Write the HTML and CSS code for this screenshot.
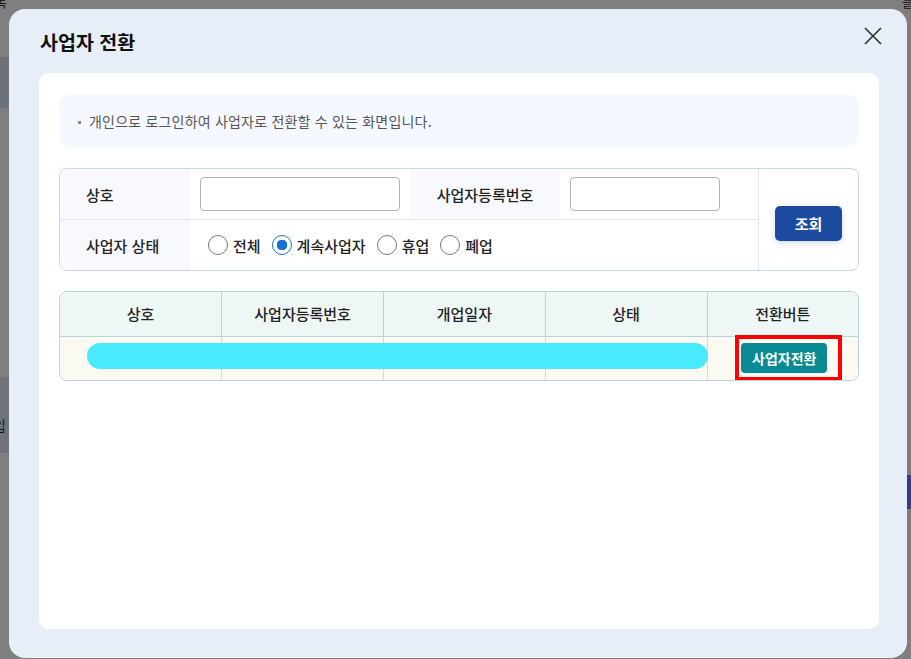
FILE: index.html
```html
<!DOCTYPE html>
<html lang="ko">
<head>
    <meta charset="UTF-8">
    <title>사업자 전환</title>
    <link rel="stylesheet" href="styles.css">
</head>
<body>
    <div class="page">
        <span class="page-text top-left">록</span>
        <span class="page-text top-right">를</span>
        <div class="page-strip strip-a"></div>
        <div class="page-strip strip-b"><span class="page-text">입</span></div>
        <div class="page-strip strip-c"></div>
    </div>

    <div class="modal">
        <div class="modal-head">
            <h2 class="modal-title">사업자 전환</h2>
            <button class="modal-close" aria-label="닫기">
                <svg width="20" height="20" viewBox="0 0 20 20">
                    <path d="M2 2 L18 18 M18 2 L2 18" stroke="#333" stroke-width="1.7" fill="none"/>
                </svg>
            </button>
        </div>

        <div class="panel">
            <div class="notice"><span class="dot"></span>개인으로 로그인하여 사업자로 전환할 수 있는 화면입니다.</div>

            <div class="search">
                <div class="search-fields">
                    <div class="search-row">
                        <div class="label">상호</div>
                        <div class="field"><input type="text" class="text-input"></div>
                        <div class="label label-center">사업자등록번호</div>
                        <div class="field field-short"><input type="text" class="text-input short"></div>
                    </div>
                    <div class="search-row">
                        <div class="label">사업자 상태</div>
                        <div class="field radios">
                            <label class="radio"><input type="radio" name="state"> 전체</label>
                            <label class="radio"><input type="radio" name="state" checked> 계속사업자</label>
                            <label class="radio"><input type="radio" name="state"> 휴업</label>
                            <label class="radio"><input type="radio" name="state"> 폐업</label>
                        </div>
                    </div>
                </div>
                <div class="search-action">
                    <button class="btn-search">조회</button>
                </div>
            </div>

            <div class="result">
                <table class="result-table">
                    <thead>
                        <tr>
                            <th>상호</th>
                            <th>사업자등록번호</th>
                            <th>개업일자</th>
                            <th>상태</th>
                            <th>전환버튼</th>
                        </tr>
                    </thead>
                    <tbody>
                        <tr>
                            <td></td>
                            <td></td>
                            <td></td>
                            <td></td>
                            <td><button class="btn-switch">사업자전환</button></td>
                        </tr>
                    </tbody>
                </table>
                <div class="mask"></div>
                <div class="highlight"></div>
            </div>
        </div>
    </div>
</body>
</html>
```

FILE: styles.css
```css
* {
    box-sizing: border-box;
}
body {
    margin: 0;
    width: 911px;
    height: 659px;
    overflow: hidden;
    background-color: #7f7f7f;
    font-family: "Noto Sans CJK KR", "Noto Sans", sans-serif;
    color: #222;
    position: relative;
}

/* page behind the dimmed overlay */
.page-text {
    position: absolute;
    font-size: 14px;
    color: #1a1a1a;
}
.top-left {
    left: -6px;
    top: -9px;
}
.top-right {
    left: 902px;
    top: -9px;
}
.page-strip {
    position: absolute;
}
.strip-a {
    left: 0;
    top: 57px;
    width: 9px;
    height: 51px;
    background-color: #6e7177;
}
.strip-b {
    left: 0;
    top: 377px;
    width: 9px;
    height: 76px;
    background-color: #6f7278;
}
.strip-b .page-text {
    left: -7px;
    top: 38px;
}
.strip-c {
    left: 907px;
    top: 475px;
    width: 4px;
    height: 34px;
    background-color: #303c8c;
}

/* modal */
.modal {
    position: absolute;
    left: 9px;
    top: 9px;
    width: 898px;
    height: 649px;
    background-color: #e8eef8;
    border-radius: 16px;
    padding: 0 28px 29px 30px;
    display: flex;
    flex-direction: column;
}
.modal-head {
    height: 64px;
    display: flex;
    align-items: center;
    justify-content: space-between;
    padding-left: 1px;
}
.modal-title {
    margin: 0;
    font-size: 19.5px;
    font-weight: 700;
    color: #111;
}
.modal-close {
    border: none;
    background: none;
    padding: 0;
    width: 20px;
    height: 20px;
    margin-right: -4px;
    margin-top: -10px;
    cursor: pointer;
}
.modal-close svg {
    display: block;
}

.panel {
    flex: 1;
    background-color: #fff;
    border-radius: 10px;
    padding: 21px 20px;
}

.notice {
    height: 53px;
    background-color: #f5f8fe;
    border-radius: 12px;
    padding-left: 19px;
    display: flex;
    align-items: center;
    font-size: 14px;
    letter-spacing: 0.2px;
    color: #555;
}
.dot {
    width: 3px;
    height: 3px;
    background-color: #888;
    margin: 3px 8px 0 0;
}

/* search */
.search {
    margin-top: 21px;
    height: 103px;
    border: 1px solid #c6d7f0;
    border-radius: 8px;
    display: flex;
    overflow: hidden;
}
.search-fields {
    width: 698px;
    display: flex;
    flex-direction: column;
}
.search-row {
    height: 51px;
    display: flex;
}
.search-row:first-child {
    height: 51px;
    border-bottom: 1px solid #e1e8f3;
}
.search-row:last-child {
    height: 50px;
}
.label {
    width: 130px;
    background-color: #f7f9fe;
    padding-left: 26px;
    display: flex;
    align-items: center;
    font-size: 15px;
    font-weight: 500;
}
.label-center {
    width: 150px;
    padding-left: 0;
    justify-content: center;
}
.field {
    width: 220px;
    padding: 0 10px;
    display: flex;
    align-items: center;
}
.field-short {
    width: 198px;
}
.text-input {
    width: 200px;
    height: 34px;
    border: 1px solid #b3b3b3;
    border-radius: 4px;
    background-color: #fff;
    margin-top: -1px;
}
.text-input.short {
    width: 150px;
}
.radios {
    width: auto;
    flex: 1;
    padding-left: 18px;
    gap: 11px;
}
.radio {
    display: flex;
    align-items: center;
    gap: 5px;
    font-size: 15px;
    font-weight: 500;
    cursor: pointer;
}
.radio input {
    appearance: none;
    margin: 0;
    width: 20px;
    height: 20px;
    border: 1px solid #767676;
    border-radius: 50%;
    background-color: #fff;
}
.radio input:checked {
    border-color: #1b6fd8;
    background: radial-gradient(circle, #1b6fd8 0 5px, #fff 5.5px);
}
.search-action {
    flex: 1;
    border-left: 1px solid #e1e8f3;
    display: flex;
    align-items: center;
    justify-content: center;
    padding-top: 8px;
}
.btn-search {
    width: 67px;
    height: 35px;
    border: none;
    border-radius: 5px;
    background-color: #1c4a9f;
    color: #fff;
    font-family: inherit;
    font-size: 15px;
    font-weight: 700;
    box-shadow: 0 2px 6px rgba(28, 74, 159, 0.2);
    cursor: pointer;
}

/* result table */
.result {
    position: relative;
    margin-top: 20px;
    border: 1px solid #b8d4db;
    border-radius: 8px;
    overflow: hidden;
}
.result-table {
    width: 100%;
    border-collapse: collapse;
    table-layout: fixed;
}
.result-table th {
    height: 44px;
    background-color: #eef7f6;
    border-right: 1px solid #b8d4db;
    border-bottom: 1px solid #b8d4db;
    font-size: 15px;
    font-weight: 500;
    color: #222;
}
.result-table td {
    height: 44px;
    background-color: #fbfaf2;
    border-right: 1px solid #c8dde2;
    text-align: center;
    padding: 0;
}
.result-table th:last-child,
.result-table td:last-child {
    border-right: none;
    width: 151px;
}
.btn-switch {
    width: 86px;
    height: 30px;
    border: none;
    border-radius: 4px;
    background-color: #078a94;
    color: #fff;
    font-family: inherit;
    font-size: 14px;
    font-weight: 700;
    margin-left: 3px;
    cursor: pointer;
}
.mask {
    position: absolute;
    left: 27px;
    top: 51px;
    width: 621px;
    height: 26px;
    border-radius: 13px;
    background-color: #4aeafe;
}
.highlight {
    position: absolute;
    left: 675px;
    top: 43px;
    width: 107px;
    height: 46px;
    border: 4px solid #ff0000;
}
```
